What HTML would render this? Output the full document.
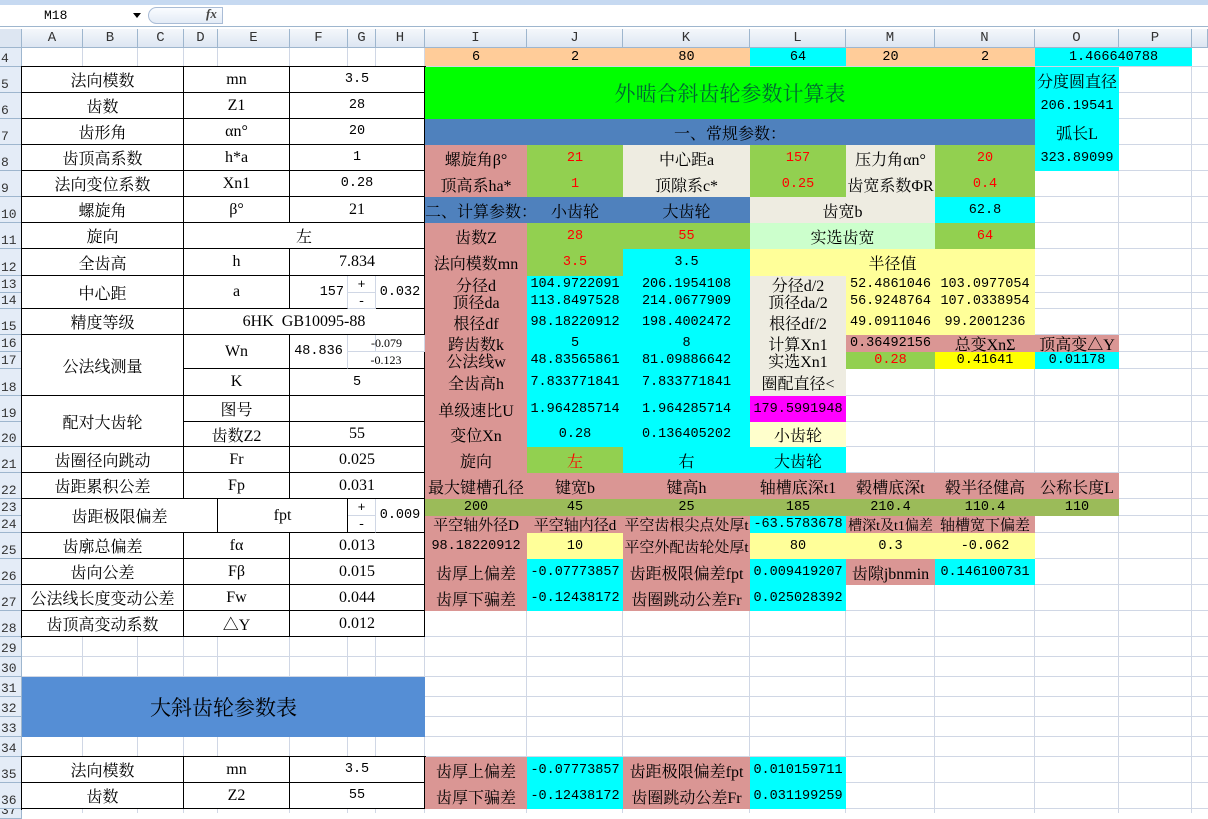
<!DOCTYPE html>
<html><head><meta charset="utf-8"><style>
*{margin:0;padding:0;box-sizing:border-box}
body{width:1208px;height:813px;overflow:hidden;background:#fff;position:relative;font-family:"Liberation Serif","Noto Serif CJK SC",serif;font-size:16px;color:#000}
.c{position:absolute;display:flex;align-items:center;justify-content:center;white-space:nowrap;overflow:visible;font-family:"Liberation Mono","Noto Serif CJK SC",monospace;font-size:13.5px;letter-spacing:0}
.z{font-family:"Liberation Serif","Noto Serif CJK SC",serif;font-size:16px;letter-spacing:0}
.t{border-right:1px solid #000;border-bottom:1px solid #000;background:#fff}
.vl{position:absolute;top:48px;height:765px;width:1px;background:#d0d7e5}
.hl{position:absolute;left:22px;width:1186px;height:1px;background:#d0d7e5}
.ch{position:absolute;top:29px;height:19px;display:flex;align-items:center;justify-content:center;font-family:"Liberation Mono",monospace;font-size:14px;color:#333;background:linear-gradient(#f4f7fb,#dde6f2);border-right:1px solid #9eb6ce;border-bottom:1px solid #9eb6ce}
.rh{position:absolute;left:0;width:22px;background:#e4ecf7;border-right:1px solid #9eb6ce;border-bottom:1px solid #9eb6ce;font-family:"Liberation Mono",monospace;font-size:13px;color:#333;display:flex;align-items:flex-end;padding-left:1px;overflow:hidden}
.r{color:#f00}
.pk{background:#da9694}.cy{background:#0ff}.gr{background:#92d050}.be{background:#eeece1}.ly{background:#ffff99}.bl{background:#4f81bd}.pe{background:#fc9}
</style></head><body>
<div style="position:absolute;left:0;top:0;width:1208px;height:5px;background:#c6d9f1"></div>
<div style="position:absolute;left:0;top:5px;width:1208px;height:22px;background:#fff;border-bottom:1px solid #9eb6ce"></div>
<div style="position:absolute;left:44px;top:8px;font-family:'Liberation Mono',monospace;font-size:13px">M18</div>
<div style="position:absolute;left:133px;top:13px;width:0;height:0;border-left:4px solid transparent;border-right:4px solid transparent;border-top:5px solid #000"></div>
<div style="position:absolute;left:148px;top:7px;width:75px;height:17px;border:1px solid #a9bcd6;border-radius:9px 0 0 9px;background:linear-gradient(#fafcff,#e3ebf6)"></div>
<div style="position:absolute;left:206px;top:6px;font-style:italic;font-size:13px;font-weight:bold;color:#444">fx</div>
<div style="position:absolute;left:0;top:29px;width:1208px;height:19px;background:linear-gradient(#f4f7fb,#dde6f2)"></div>
<div class="ch" style="left:0;width:22px;background:#dde6f2"></div>
<div class="ch" style="left:22px;width:61px">A</div><div class="ch" style="left:83px;width:55px">B</div><div class="ch" style="left:138px;width:46px">C</div><div class="ch" style="left:184px;width:34px">D</div><div class="ch" style="left:218px;width:72px">E</div><div class="ch" style="left:290px;width:58px">F</div><div class="ch" style="left:348px;width:28px">G</div><div class="ch" style="left:376px;width:49px">H</div><div class="ch" style="left:425px;width:102px">I</div><div class="ch" style="left:527px;width:96px">J</div><div class="ch" style="left:623px;width:127px">K</div><div class="ch" style="left:750px;width:96px">L</div><div class="ch" style="left:846px;width:89px">M</div><div class="ch" style="left:935px;width:100px">N</div><div class="ch" style="left:1035px;width:84px">O</div><div class="ch" style="left:1119px;width:73px">P</div><div class="ch" style="left:1192px;width:16px"></div>
<div class="vl" style="left:82px"></div><div class="vl" style="left:137px"></div><div class="vl" style="left:183px"></div><div class="vl" style="left:217px"></div><div class="vl" style="left:289px"></div><div class="vl" style="left:347px"></div><div class="vl" style="left:375px"></div><div class="vl" style="left:424px"></div><div class="vl" style="left:526px"></div><div class="vl" style="left:622px"></div><div class="vl" style="left:749px"></div><div class="vl" style="left:845px"></div><div class="vl" style="left:934px"></div><div class="vl" style="left:1034px"></div><div class="vl" style="left:1118px"></div><div class="vl" style="left:1191px"></div>
<div class="hl" style="top:66px"></div><div class="hl" style="top:92px"></div><div class="hl" style="top:118px"></div><div class="hl" style="top:144px"></div><div class="hl" style="top:170px"></div><div class="hl" style="top:196px"></div><div class="hl" style="top:222px"></div><div class="hl" style="top:248px"></div><div class="hl" style="top:275px"></div><div class="hl" style="top:292px"></div><div class="hl" style="top:308px"></div><div class="hl" style="top:334px"></div><div class="hl" style="top:351px"></div><div class="hl" style="top:368px"></div><div class="hl" style="top:395px"></div><div class="hl" style="top:421px"></div><div class="hl" style="top:446px"></div><div class="hl" style="top:472px"></div><div class="hl" style="top:498px"></div><div class="hl" style="top:515px"></div><div class="hl" style="top:532px"></div><div class="hl" style="top:558px"></div><div class="hl" style="top:584px"></div><div class="hl" style="top:610px"></div><div class="hl" style="top:636px"></div><div class="hl" style="top:656px"></div><div class="hl" style="top:676px"></div><div class="hl" style="top:696px"></div><div class="hl" style="top:716px"></div><div class="hl" style="top:736px"></div><div class="hl" style="top:756px"></div><div class="hl" style="top:782px"></div><div class="hl" style="top:808px"></div>
<div class="rh" style="top:48px;height:19px">4</div><div class="rh" style="top:67px;height:26px">5</div><div class="rh" style="top:93px;height:26px">6</div><div class="rh" style="top:119px;height:26px">7</div><div class="rh" style="top:145px;height:26px">8</div><div class="rh" style="top:171px;height:26px">9</div><div class="rh" style="top:197px;height:26px">10</div><div class="rh" style="top:223px;height:26px">11</div><div class="rh" style="top:249px;height:27px">12</div><div class="rh" style="top:276px;height:17px">13</div><div class="rh" style="top:293px;height:16px">14</div><div class="rh" style="top:309px;height:26px">15</div><div class="rh" style="top:335px;height:17px">16</div><div class="rh" style="top:352px;height:17px">17</div><div class="rh" style="top:369px;height:27px">18</div><div class="rh" style="top:396px;height:26px">19</div><div class="rh" style="top:422px;height:25px">20</div><div class="rh" style="top:447px;height:26px">21</div><div class="rh" style="top:473px;height:26px">22</div><div class="rh" style="top:499px;height:17px">23</div><div class="rh" style="top:516px;height:17px">24</div><div class="rh" style="top:533px;height:26px">25</div><div class="rh" style="top:559px;height:26px">26</div><div class="rh" style="top:585px;height:26px">27</div><div class="rh" style="top:611px;height:26px">28</div><div class="rh" style="top:637px;height:20px">29</div><div class="rh" style="top:657px;height:20px">30</div><div class="rh" style="top:677px;height:20px">31</div><div class="rh" style="top:697px;height:20px">32</div><div class="rh" style="top:717px;height:20px">33</div><div class="rh" style="top:737px;height:20px">34</div><div class="rh" style="top:757px;height:26px">35</div><div class="rh" style="top:783px;height:26px">36</div><div class="rh" style="top:809px;height:10px">37</div>
<div style="position:absolute;left:21px;top:66px;width:405px;height:572px;border-left:1px solid #000;border-top:1px solid #000"></div>
<div class="c z t" style="left:22px;top:67px;width:162px;height:26px">法向模数</div><div class="c z t" style="left:184px;top:67px;width:106px;height:26px">mn</div><div class="c t" style="left:290px;top:67px;width:135px;height:26px">3.5</div>
<div class="c z t" style="left:22px;top:93px;width:162px;height:26px">齿数</div><div class="c z t" style="left:184px;top:93px;width:106px;height:26px">Z1</div><div class="c t" style="left:290px;top:93px;width:135px;height:26px">28</div>
<div class="c z t" style="left:22px;top:119px;width:162px;height:26px">齿形角</div><div class="c z t" style="left:184px;top:119px;width:106px;height:26px">αn°</div><div class="c t" style="left:290px;top:119px;width:135px;height:26px">20</div>
<div class="c z t" style="left:22px;top:145px;width:162px;height:26px">齿顶高系数</div><div class="c z t" style="left:184px;top:145px;width:106px;height:26px">h*a</div><div class="c t" style="left:290px;top:145px;width:135px;height:26px">1</div>
<div class="c z t" style="left:22px;top:171px;width:162px;height:26px">法向变位系数</div><div class="c z t" style="left:184px;top:171px;width:106px;height:26px">Xn1</div><div class="c t" style="left:290px;top:171px;width:135px;height:26px">0.28</div>
<div class="c z t" style="left:22px;top:197px;width:162px;height:26px">螺旋角</div><div class="c z t" style="left:184px;top:197px;width:106px;height:26px">β°</div><div class="c z t" style="left:290px;top:197px;width:135px;height:26px">21</div>
<div class="c z t" style="left:22px;top:223px;width:162px;height:26px">旋向</div><div class="c z t" style="left:184px;top:223px;width:241px;height:26px">左</div>
<div class="c z t" style="left:22px;top:249px;width:162px;height:27px">全齿高</div><div class="c z t" style="left:184px;top:249px;width:106px;height:27px">h</div><div class="c z t" style="left:290px;top:249px;width:135px;height:27px">7.834</div>
<div class="c z t" style="left:22px;top:276px;width:162px;height:33px">中心距</div><div class="c z t" style="left:184px;top:276px;width:106px;height:33px">a</div><div class="c t" style="left:290px;top:276px;width:58px;height:33px;justify-content:flex-end;padding-right:3px;border-right:1px solid #d0d7e5">157</div>
<div class="c" style="left:348px;top:276px;width:28px;height:17px;border-bottom:1px solid #d0d7e5;border-right:1px solid #d0d7e5;font-size:13px">+</div><div class="c" style="left:348px;top:293px;width:28px;height:16px;border-right:1px solid #d0d7e5;font-size:13px">-</div>
<div class="c t" style="left:376px;top:276px;width:49px;height:33px">0.032</div>
<div class="c z t" style="left:22px;top:309px;width:162px;height:26px">精度等级</div><div class="c z t" style="left:184px;top:309px;width:241px;height:26px">6HK&nbsp;&nbsp;GB10095-88</div>
<div class="c z t" style="left:22px;top:335px;width:162px;height:61px">公法线测量</div><div class="c z t" style="left:184px;top:335px;width:106px;height:34px">Wn</div><div class="c t" style="left:290px;top:335px;width:58px;height:34px;border-right:1px solid #d0d7e5">48.836</div>
<div class="c z" style="left:348px;top:335px;width:77px;height:17px;font-size:12px;border-bottom:1px solid #d0d7e5">-0.079</div><div class="c z t" style="left:348px;top:352px;width:77px;height:17px;font-size:12px">-0.123</div>
<div class="c z t" style="left:184px;top:369px;width:106px;height:27px">K</div><div class="c t" style="left:290px;top:369px;width:135px;height:27px">5</div>
<div class="c z t" style="left:22px;top:396px;width:162px;height:51px">配对大齿轮</div><div class="c z t" style="left:184px;top:396px;width:106px;height:26px">图号</div><div class="c t" style="left:290px;top:396px;width:135px;height:26px"></div>
<div class="c z t" style="left:184px;top:422px;width:106px;height:25px">齿数Z2</div><div class="c z t" style="left:290px;top:422px;width:135px;height:25px">55</div>
<div class="c z t" style="left:22px;top:447px;width:162px;height:26px">齿圈径向跳动</div><div class="c z t" style="left:184px;top:447px;width:106px;height:26px">Fr</div><div class="c z t" style="left:290px;top:447px;width:135px;height:26px">0.025</div>
<div class="c z t" style="left:22px;top:473px;width:162px;height:26px">齿距累积公差</div><div class="c z t" style="left:184px;top:473px;width:106px;height:26px">Fp</div><div class="c z t" style="left:290px;top:473px;width:135px;height:26px">0.031</div>
<div class="c z t" style="left:22px;top:499px;width:196px;height:34px">齿距极限偏差</div><div class="c z t" style="left:218px;top:499px;width:130px;height:34px">fpt</div>
<div class="c" style="left:348px;top:499px;width:28px;height:17px;border-bottom:1px solid #d0d7e5;border-right:1px solid #d0d7e5;font-size:13px">+</div><div class="c" style="left:348px;top:516px;width:28px;height:17px;border-right:1px solid #d0d7e5;border-bottom:1px solid #000;font-size:13px">-</div>
<div class="c t" style="left:376px;top:499px;width:49px;height:34px">0.009</div>
<div class="c z t" style="left:22px;top:533px;width:162px;height:26px">齿廓总偏差</div><div class="c z t" style="left:184px;top:533px;width:106px;height:26px">fα</div><div class="c z t" style="left:290px;top:533px;width:135px;height:26px">0.013</div>
<div class="c z t" style="left:22px;top:559px;width:162px;height:26px">齿向公差</div><div class="c z t" style="left:184px;top:559px;width:106px;height:26px">Fβ</div><div class="c z t" style="left:290px;top:559px;width:135px;height:26px">0.015</div>
<div class="c z t" style="left:22px;top:585px;width:162px;height:26px">公法线长度变动公差</div><div class="c z t" style="left:184px;top:585px;width:106px;height:26px">Fw</div><div class="c z t" style="left:290px;top:585px;width:135px;height:26px">0.044</div>
<div class="c z t" style="left:22px;top:611px;width:162px;height:26px">齿顶高变动系数</div><div class="c z t" style="left:184px;top:611px;width:106px;height:26px">△Y</div><div class="c z t" style="left:290px;top:611px;width:135px;height:26px">0.012</div>
<div class="c z" style="left:22px;top:677px;width:403px;height:60px;background:#558ed5;font-size:21px">大斜齿轮参数表</div>
<div style="position:absolute;left:21px;top:756px;width:405px;height:54px;border-left:1px solid #000;border-top:1px solid #000"></div>
<div class="c z t" style="left:22px;top:757px;width:162px;height:26px">法向模数</div><div class="c z t" style="left:184px;top:757px;width:106px;height:26px">mn</div><div class="c t" style="left:290px;top:757px;width:135px;height:26px">3.5</div>
<div class="c z t" style="left:22px;top:783px;width:162px;height:26px">齿数</div><div class="c z t" style="left:184px;top:783px;width:106px;height:26px">Z2</div><div class="c t" style="left:290px;top:783px;width:135px;height:26px">55</div>
<div class="c pe" style="left:425px;top:48px;width:102px;height:18px">6</div><div class="c pe" style="left:527px;top:48px;width:96px;height:18px">2</div><div class="c pe" style="left:623px;top:48px;width:127px;height:18px">80</div><div class="c cy" style="left:750px;top:48px;width:96px;height:18px">64</div><div class="c pe" style="left:846px;top:48px;width:89px;height:18px">20</div><div class="c pe" style="left:935px;top:48px;width:100px;height:18px">2</div><div class="c cy" style="left:1035px;top:48px;width:157px;height:18px">1.466640788</div>
<div class="c z" style="left:425px;top:67px;width:610px;height:52px;background:#0f0;font-size:21px;color:#063">外啮合斜齿轮参数计算表</div>
<div class="c z cy" style="left:1035px;top:67px;width:84px;height:26px">分度圆直径</div><div class="c cy" style="left:1035px;top:93px;width:84px;height:26px">206.19541</div><div class="c z cy" style="left:1035px;top:119px;width:84px;height:26px">弧长L</div><div class="c cy" style="left:1035px;top:145px;width:84px;height:26px">323.89099</div>
<div class="c z bl" style="left:425px;top:119px;width:610px;height:26px">一、常规参数：</div>
<div class="c z pk" style="left:425px;top:145px;width:102px;height:26px">螺旋角β°</div><div class="c gr r" style="left:527px;top:145px;width:96px;height:26px">21</div><div class="c z be" style="left:623px;top:145px;width:127px;height:26px">中心距a</div><div class="c gr r" style="left:750px;top:145px;width:96px;height:26px">157</div><div class="c z be" style="left:846px;top:145px;width:89px;height:26px">压力角αn°</div><div class="c gr r" style="left:935px;top:145px;width:100px;height:26px">20</div>
<div class="c z pk" style="left:425px;top:171px;width:102px;height:26px">顶高系ha*</div><div class="c gr r" style="left:527px;top:171px;width:96px;height:26px">1</div><div class="c z be" style="left:623px;top:171px;width:127px;height:26px">顶隙系c*</div><div class="c gr r" style="left:750px;top:171px;width:96px;height:26px">0.25</div><div class="c z be" style="left:846px;top:171px;width:89px;height:26px">齿宽系数ΦR</div><div class="c gr r" style="left:935px;top:171px;width:100px;height:26px">0.4</div>
<div class="c z bl" style="left:425px;top:197px;width:102px;height:26px;justify-content:flex-start">二、计算参数：</div><div class="c z bl" style="left:527px;top:197px;width:96px;height:26px">小齿轮</div><div class="c z bl" style="left:623px;top:197px;width:127px;height:26px">大齿轮</div><div class="c z be" style="left:750px;top:197px;width:185px;height:26px">齿宽b</div><div class="c cy" style="left:935px;top:197px;width:100px;height:26px">62.8</div>
<div class="c z pk" style="left:425px;top:223px;width:102px;height:26px">齿数Z</div><div class="c gr r" style="left:527px;top:223px;width:96px;height:26px">28</div><div class="c gr r" style="left:623px;top:223px;width:127px;height:26px">55</div><div class="c z" style="left:750px;top:223px;width:185px;height:26px;background:#cfc">实选齿宽</div><div class="c gr r" style="left:935px;top:223px;width:100px;height:26px">64</div>
<div class="c z pk" style="left:425px;top:249px;width:102px;height:27px">法向模数mn</div><div class="c gr r" style="left:527px;top:249px;width:96px;height:27px">3.5</div><div class="c cy" style="left:623px;top:249px;width:127px;height:27px">3.5</div><div class="c z ly" style="left:750px;top:249px;width:285px;height:27px">半径值</div>
<div class="c z pk" style="left:425px;top:276px;width:102px;height:17px">分径d</div><div class="c cy" style="left:527px;top:276px;width:96px;height:17px">104.9722091</div><div class="c cy" style="left:623px;top:276px;width:127px;height:17px">206.1954108</div><div class="c z be" style="left:750px;top:276px;width:96px;height:17px">分径d/2</div><div class="c ly" style="left:846px;top:276px;width:89px;height:17px">52.4861046</div><div class="c ly" style="left:935px;top:276px;width:100px;height:17px">103.0977054</div>
<div class="c z pk" style="left:425px;top:293px;width:102px;height:16px">顶径da</div><div class="c cy" style="left:527px;top:293px;width:96px;height:16px">113.8497528</div><div class="c cy" style="left:623px;top:293px;width:127px;height:16px">214.0677909</div><div class="c z be" style="left:750px;top:293px;width:96px;height:16px">顶径da/2</div><div class="c ly" style="left:846px;top:293px;width:89px;height:16px">56.9248764</div><div class="c ly" style="left:935px;top:293px;width:100px;height:16px">107.0338954</div>
<div class="c z pk" style="left:425px;top:309px;width:102px;height:26px">根径df</div><div class="c cy" style="left:527px;top:309px;width:96px;height:26px">98.18220912</div><div class="c cy" style="left:623px;top:309px;width:127px;height:26px">198.4002472</div><div class="c z be" style="left:750px;top:309px;width:96px;height:26px">根径df/2</div><div class="c ly" style="left:846px;top:309px;width:89px;height:26px">49.0911046</div><div class="c ly" style="left:935px;top:309px;width:100px;height:26px">99.2001236</div>
<div class="c z pk" style="left:425px;top:335px;width:102px;height:17px">跨齿数k</div><div class="c cy" style="left:527px;top:335px;width:96px;height:17px">5</div><div class="c cy" style="left:623px;top:335px;width:127px;height:17px">8</div><div class="c z be" style="left:750px;top:335px;width:96px;height:17px">计算Xn1</div><div class="c pk" style="left:846px;top:335px;width:89px;height:17px">0.36492156</div><div class="c z pk" style="left:935px;top:335px;width:100px;height:17px">总变XnΣ</div><div class="c z pk" style="left:1035px;top:335px;width:84px;height:17px">顶高变△Y</div>
<div class="c z pk" style="left:425px;top:352px;width:102px;height:17px">公法线w</div><div class="c cy" style="left:527px;top:352px;width:96px;height:17px">48.83565861</div><div class="c cy" style="left:623px;top:352px;width:127px;height:17px">81.09886642</div><div class="c z be" style="left:750px;top:352px;width:96px;height:17px">实选Xn1</div><div class="c gr r" style="left:846px;top:352px;width:89px;height:17px">0.28</div><div class="c" style="left:935px;top:352px;width:100px;height:17px;background:#ff0">0.41641</div><div class="c cy" style="left:1035px;top:352px;width:84px;height:17px">0.01178</div>
<div class="c z pk" style="left:425px;top:369px;width:102px;height:27px">全齿高h</div><div class="c cy" style="left:527px;top:369px;width:96px;height:27px">7.833771841</div><div class="c cy" style="left:623px;top:369px;width:127px;height:27px">7.833771841</div><div class="c z be" style="left:750px;top:369px;width:96px;height:27px">圈配直径&lt;</div>
<div class="c z pk" style="left:425px;top:396px;width:102px;height:26px">单级速比U</div><div class="c cy" style="left:527px;top:396px;width:96px;height:26px">1.964285714</div><div class="c cy" style="left:623px;top:396px;width:127px;height:26px">1.964285714</div><div class="c" style="left:750px;top:396px;width:96px;height:26px;background:#f0f">179.5991948</div>
<div class="c z pk" style="left:425px;top:422px;width:102px;height:25px">变位Xn</div><div class="c cy" style="left:527px;top:422px;width:96px;height:25px">0.28</div><div class="c cy" style="left:623px;top:422px;width:127px;height:25px">0.136405202</div><div class="c z" style="left:750px;top:422px;width:96px;height:25px;background:#ffc">小齿轮</div>
<div class="c z pk" style="left:425px;top:447px;width:102px;height:26px">旋向</div><div class="c z gr r" style="left:527px;top:447px;width:96px;height:26px">左</div><div class="c z cy" style="left:623px;top:447px;width:127px;height:26px">右</div><div class="c z cy" style="left:750px;top:447px;width:96px;height:26px">大齿轮</div>
<div class="c z pk" style="left:425px;top:473px;width:102px;height:26px">最大键槽孔径</div><div class="c z pk" style="left:527px;top:473px;width:96px;height:26px">键宽b</div><div class="c z pk" style="left:623px;top:473px;width:127px;height:26px">键高h</div><div class="c z pk" style="left:750px;top:473px;width:96px;height:26px">轴槽底深t1</div><div class="c z pk" style="left:846px;top:473px;width:89px;height:26px">毂槽底深t</div><div class="c z pk" style="left:935px;top:473px;width:100px;height:26px">毂半径健高</div><div class="c z pk" style="left:1035px;top:473px;width:84px;height:26px">公称长度L</div>
<div class="c" style="left:425px;top:499px;width:694px;height:17px;background:#9bbb59"></div>
<div class="c" style="left:425px;top:499px;width:102px;height:17px">200</div><div class="c" style="left:527px;top:499px;width:96px;height:17px">45</div><div class="c" style="left:623px;top:499px;width:127px;height:17px">25</div><div class="c" style="left:750px;top:499px;width:96px;height:17px">185</div><div class="c" style="left:846px;top:499px;width:89px;height:17px">210.4</div><div class="c" style="left:935px;top:499px;width:100px;height:17px">110.4</div><div class="c" style="left:1035px;top:499px;width:84px;height:17px">110</div>
<div class="c z pk" style="left:425px;top:516px;width:102px;height:17px;font-size:15px">平空轴外径D</div><div class="c z pk" style="left:527px;top:516px;width:96px;height:17px;font-size:15px">平空轴内径d</div><div class="c z pk" style="left:623px;top:516px;width:127px;height:17px;font-size:15px;overflow:hidden">平空齿根尖点处厚t</div><div class="c cy" style="left:750px;top:516px;width:96px;height:17px">-63.5783678</div><div class="c z pk" style="left:846px;top:516px;width:89px;height:17px;font-size:14px">槽深t及t1偏差</div><div class="c z pk" style="left:935px;top:516px;width:100px;height:17px;font-size:15px">轴槽宽下偏差</div>
<div class="c pk" style="left:425px;top:533px;width:102px;height:26px">98.18220912</div><div class="c ly" style="left:527px;top:533px;width:96px;height:26px">10</div><div class="c z pk" style="left:623px;top:533px;width:127px;height:26px;font-size:15px;overflow:hidden">平空外配齿轮处厚t</div><div class="c ly" style="left:750px;top:533px;width:96px;height:26px">80</div><div class="c ly" style="left:846px;top:533px;width:89px;height:26px">0.3</div><div class="c ly" style="left:935px;top:533px;width:100px;height:26px">-0.062</div>
<div class="c z pk" style="left:425px;top:559px;width:102px;height:26px">齿厚上偏差</div><div class="c cy" style="left:527px;top:559px;width:96px;height:26px">-0.07773857</div><div class="c z pk" style="left:623px;top:559px;width:127px;height:26px">齿距极限偏差fpt</div><div class="c cy" style="left:750px;top:559px;width:96px;height:26px">0.009419207</div><div class="c z pk" style="left:846px;top:559px;width:89px;height:26px">齿隙jbnmin</div><div class="c cy" style="left:935px;top:559px;width:100px;height:26px">0.146100731</div>
<div class="c z pk" style="left:425px;top:585px;width:102px;height:26px">齿厚下骗差</div><div class="c cy" style="left:527px;top:585px;width:96px;height:26px">-0.12438172</div><div class="c z pk" style="left:623px;top:585px;width:127px;height:26px">齿圈跳动公差Fr</div><div class="c cy" style="left:750px;top:585px;width:96px;height:26px">0.025028392</div>
<div class="c z pk" style="left:425px;top:757px;width:102px;height:26px">齿厚上偏差</div><div class="c cy" style="left:527px;top:757px;width:96px;height:26px">-0.07773857</div><div class="c z pk" style="left:623px;top:757px;width:127px;height:26px">齿距极限偏差fpt</div><div class="c cy" style="left:750px;top:757px;width:96px;height:26px">0.010159711</div>
<div class="c z pk" style="left:425px;top:783px;width:102px;height:26px">齿厚下骗差</div><div class="c cy" style="left:527px;top:783px;width:96px;height:26px">-0.12438172</div><div class="c z pk" style="left:623px;top:783px;width:127px;height:26px">齿圈跳动公差Fr</div><div class="c cy" style="left:750px;top:783px;width:96px;height:26px">0.031199259</div>
</body></html>
